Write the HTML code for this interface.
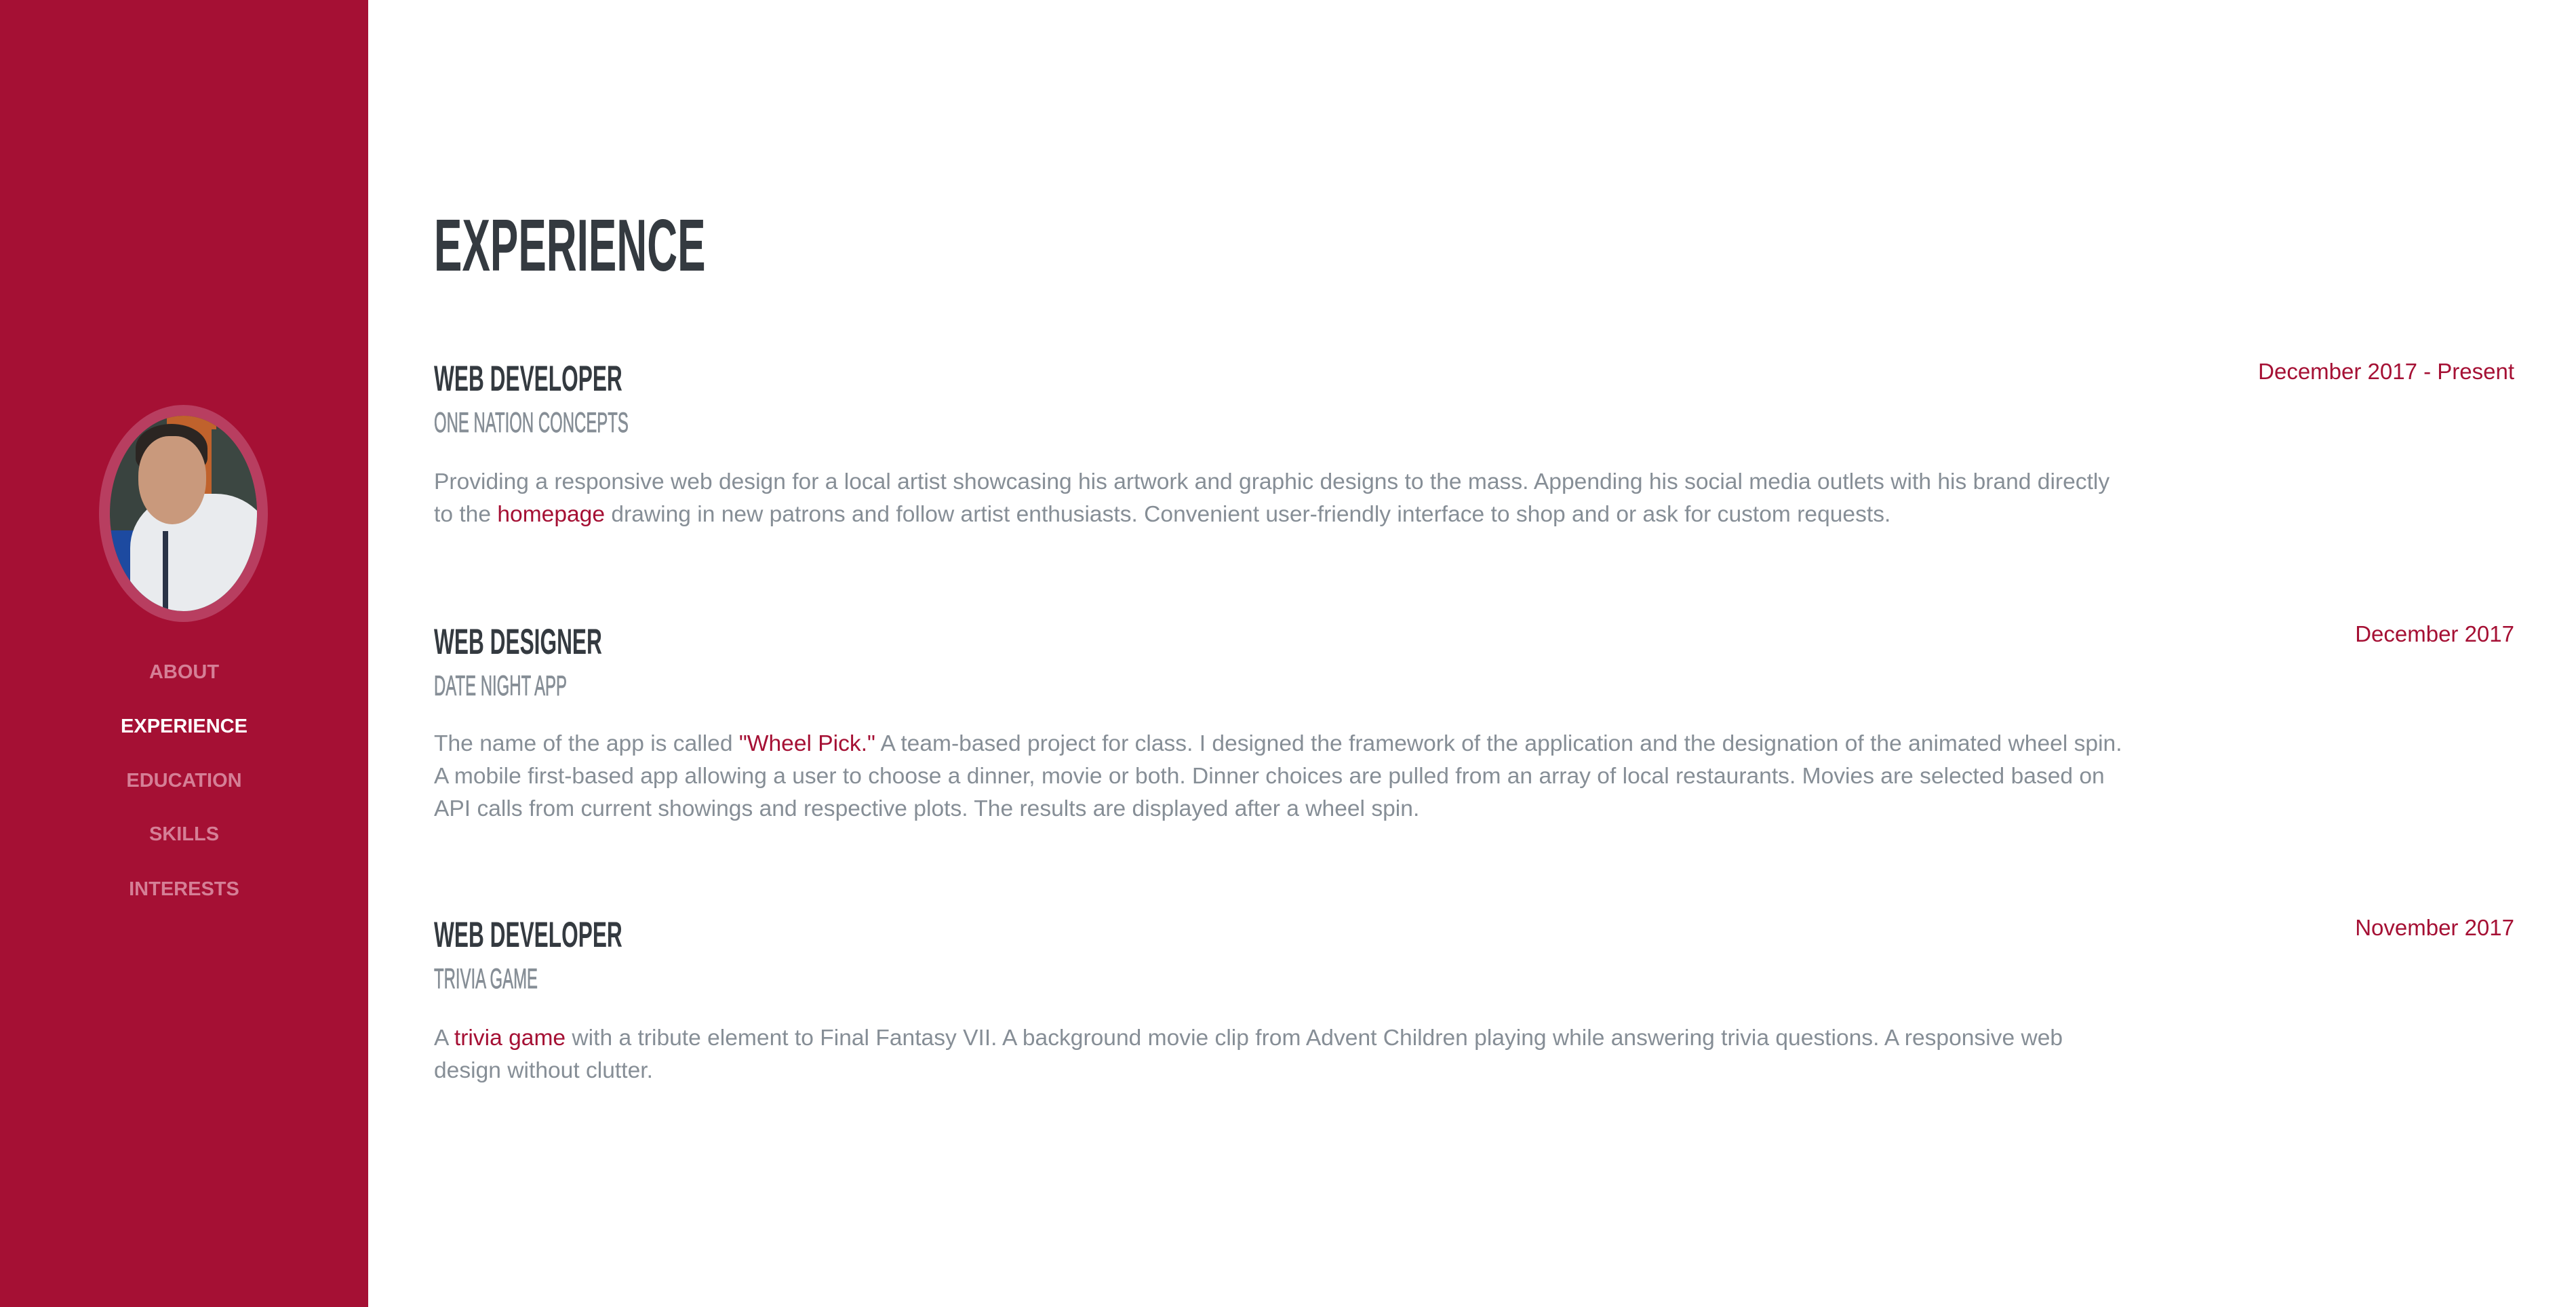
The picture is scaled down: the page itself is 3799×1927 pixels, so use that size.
<!DOCTYPE html>
<html><head><meta charset="utf-8"><style>
*{margin:0;padding:0;box-sizing:border-box}
html,body{width:3799px;height:1927px;overflow:hidden;background:#fff;font-family:"Liberation Sans",sans-serif}
#side{position:absolute;left:0;top:0;width:543px;height:1927px;background:#a51034}
.nav{position:absolute;left:0;width:543px;text-align:center;font-weight:bold;font-size:29px;line-height:1;color:#d57f96}
.nav.on{color:#fff}
#ph{position:absolute;left:146px;top:597px;width:249px;height:320px;border-radius:50%;border:16px solid #b83e60;overflow:hidden;background:#39433f}
#ph div{position:absolute}
.a{position:absolute;white-space:nowrap;line-height:1}
.h{font-weight:bold;color:#343a40;transform:scaleX(.597);transform-origin:left top}
.s{color:#868e96;transform:scaleX(.57);transform-origin:left top;-webkit-text-stroke:0.8px #868e96}
.p{position:absolute;left:640px;font-size:33.6px;line-height:48px;color:#868e96;white-space:nowrap}
.p a{color:#a51034;text-decoration:none}
.d{position:absolute;right:91px;font-size:33px;line-height:1;color:#a51034;white-space:nowrap}
</style></head><body>
<div id="side">
 <div id="ph">
  <div style="left:84px;top:0;width:73px;height:140px;background:#c0622c"></div>
  <div style="left:150px;top:20px;width:70px;height:160px;background:#3c4742"></div>
  <div style="left:0;top:169px;width:60px;height:130px;background:#1d4aa0"></div>
  <div style="left:30px;top:115px;width:210px;height:200px;background:#e9ebee;border-radius:40% 40% 0 0"></div>
  <div style="left:78px;top:170px;width:8px;height:130px;background:#2a3346"></div>
  <div style="left:38px;top:12px;width:106px;height:72px;background:#2b2522;border-radius:50% 50% 30% 30%"></div>
  <div style="left:42px;top:30px;width:100px;height:130px;background:#c9997c;border-radius:45% 45% 50% 50%"></div>
 </div>
 <div class="nav" style="top:977px">ABOUT</div>
 <div class="nav on" style="top:1057px">EXPERIENCE</div>
 <div class="nav" style="top:1137px">EDUCATION</div>
 <div class="nav" style="top:1216px">SKILLS</div>
 <div class="nav" style="top:1297px">INTERESTS</div>
</div>

<div class="a h" style="left:640px;top:308px;font-size:109px;transform:scaleX(.57)">EXPERIENCE</div>

<div class="a h" style="left:640px;top:532px;font-size:53px">WEB DEVELOPER</div>
<div class="a s" style="left:640px;top:602px;font-size:42px">ONE NATION CONCEPTS</div>
<div class="p" style="top:687px">Providing a responsive web design for a local artist showcasing his artwork and graphic designs to the mass. Appending his social media outlets with his brand directly<br>to the <a>homepage</a> drawing in new patrons and follow artist enthusiasts. Convenient user-friendly interface to shop and or ask for custom requests.</div>
<div class="d" style="top:531px">December 2017 - Present</div>

<div class="a h" style="left:640px;top:920px;font-size:53px">WEB DESIGNER</div>
<div class="a s" style="left:640px;top:990px;font-size:42px">DATE NIGHT APP</div>
<div class="p" style="top:1073px">The name of the app is called <a>"Wheel Pick."</a> A team-based project for class. I designed the framework of the application and the designation of the animated wheel spin.<br>A mobile first-based app allowing a user to choose a dinner, movie or both. Dinner choices are pulled from an array of local restaurants. Movies are selected based on<br>API calls from current showings and respective plots. The results are displayed after a wheel spin.</div>
<div class="d" style="top:918px">December 2017</div>

<div class="a h" style="left:640px;top:1352px;font-size:53px">WEB DEVELOPER</div>
<div class="a s" style="left:640px;top:1422px;font-size:42px">TRIVIA GAME</div>
<div class="p" style="top:1507px">A <a>trivia game</a> with a tribute element to Final Fantasy VII. A background movie clip from Advent Children playing while answering trivia questions. A responsive web<br>design without clutter.</div>
<div class="d" style="top:1351px">November 2017</div>
</body></html>
